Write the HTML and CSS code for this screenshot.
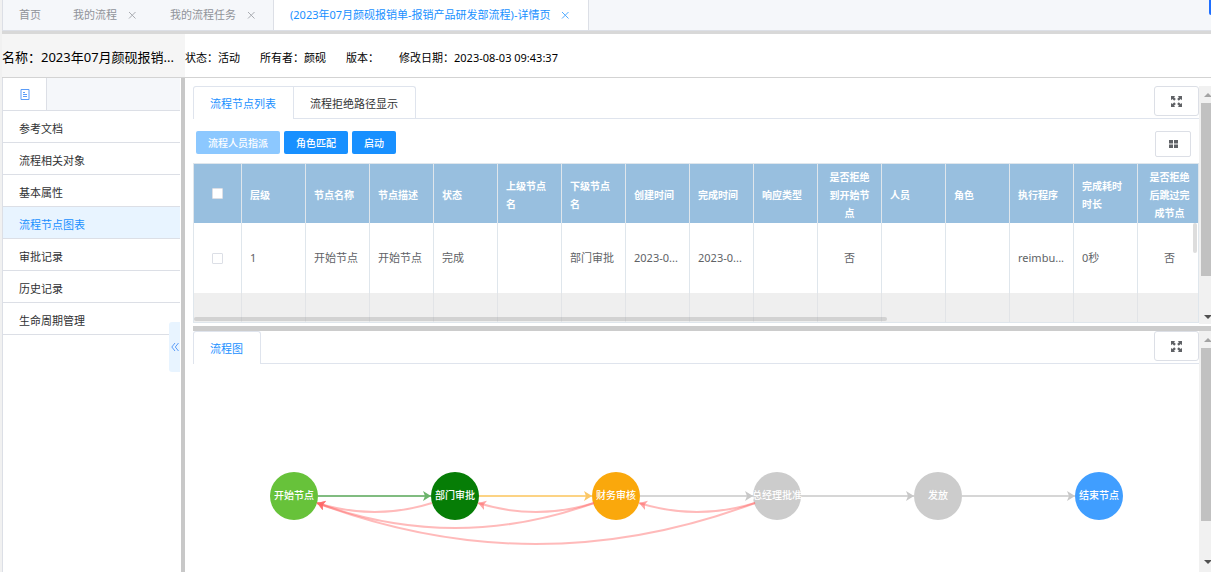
FILE: index.html
```html
<!DOCTYPE html>
<html lang="zh-CN">
<head>
<meta charset="utf-8">
<meta name="viewport" content="width=device-width, initial-scale=1">
<title>流程详情页</title>
<link rel="stylesheet" href="styles.css">
</head>
<body>
<svg class="defs" aria-hidden="true">
  <symbol id="i-close" viewBox="0 0 12 12"><path d="M3 3l6.500 6.500M9.500 3L3 9.500" fill="none" stroke="currentColor"/></symbol>
  <symbol id="i-full" viewBox="0 0 12 12"><path d="M0 0h4.500L3.300 1.400l2 2L3.500 5.200l-2-2L0 4.500zM12 0v4.500l-1.500-1.300-2 2L6.700 3.400l2-2L7.500 0zM0 12V7.500l1.500 1.300 2-2L5.300 8.600l-2 2L4.500 12zM12 12H7.500l1.200-1.400-2-2L8.500 6.800l2 2L12 7.500z" fill="currentColor"/></symbol>
</svg>
<div class="page">
  <nav class="top-tabs">
    <button class="top-tab">首页</button>
    <button class="top-tab">我的流程<svg class="close"><use href="#i-close"/></svg></button>
    <button class="top-tab">我的流程任务<svg class="close"><use href="#i-close"/></svg></button>
    <button class="top-tab is-active">(2023年07月颜砚报销单-报销产品研发部流程)-详情页<svg class="close"><use href="#i-close"/></svg></button>
    <span class="edge-mark"></span>
  </nav>
  <header class="info">
    <h1 class="info-name">名称：2023年07月颜砚报销...</h1>
    <span>状态：活动</span>
    <span>所有者：颜砚</span>
    <span>版本：</span>
    <span>修改日期：2023-08-03 09:43:37</span>
  </header>
  <div class="body">
    <aside class="side">
      <div class="side-tabs">
        <button class="side-tab" aria-label="文档">
          <svg class="doc" viewBox="0 0 10 11"><path d="M1 .5h8v10H1zM3 3.500h2M3 5.500h4M3 7.500h4" fill="none" stroke="currentColor"/></svg>
        </button>
      </div>
      <ul class="menu">
        <li><a href="#">参考文档</a></li>
        <li><a href="#">流程相关对象</a></li>
        <li><a href="#">基本属性</a></li>
        <li><a class="is-active" href="#">流程节点图表</a></li>
        <li><a href="#">审批记录</a></li>
        <li><a href="#">历史记录</a></li>
        <li><a href="#">生命周期管理</a></li>
      </ul>
      <button class="collapse" aria-label="收起">
        <svg viewBox="0 0 8 10"><path d="M4 1L.8 5 4 9M7.500 1L4.300 5l3.200 4" fill="none" stroke="currentColor"/></svg>
      </button>
    </aside>
    <main class="main">
      <section class="pane pane-list">
        <div class="pane-body">
          <div class="tabs">
            <button class="tab is-active">流程节点列表</button>
            <button class="tab">流程拒绝路径显示</button>
            <button class="full" aria-label="全屏"><svg><use href="#i-full"/></svg></button>
          </div>
          <div class="tools">
            <button class="btn" disabled>流程人员指派</button>
            <button class="btn">角色匹配</button>
            <button class="btn">启动</button>
            <button class="grid-btn" aria-label="列设置"><svg viewBox="0 0 9 8"><path d="M0 0h4v3.500H0zM5 0h4v3.500H5zM0 4.500h4V8H0zM5 4.500h4V8H5z" fill="currentColor"/></svg></button>
          </div>
          <div class="table-wrap">
            <table class="table">
              <thead>
                <tr>
                  <th class="pick"><input type="checkbox" aria-label="全选"></th>
                  <th>层级</th><th>节点名称</th><th>节点描述</th><th>状态</th><th>上级节点名</th><th>下级节点名</th><th>创建时间</th><th>完成时间</th><th>响应类型</th><th class="mid">是否拒绝到开始节点</th><th>人员</th><th>角色</th><th>执行程序</th><th>完成耗时时长</th><th class="mid">是否拒绝后跳过完成节点</th>
                </tr>
              </thead>
              <tbody>
                <tr>
                  <td class="pick"><input type="checkbox" aria-label="选择开始节点"></td>
                  <td>1</td><td>开始节点</td><td>开始节点</td><td>完成</td><td></td><td>部门审批</td><td>2023-0...</td><td>2023-0...</td><td></td><td class="mid">否</td><td></td><td></td><td>reimbu...</td><td>0秒</td><td class="mid">否</td>
                </tr>
                <tr class="next">
                  <td></td><td></td><td></td><td></td><td></td><td></td><td></td><td></td><td></td><td></td><td></td><td></td><td></td><td></td><td></td><td></td>
                </tr>
              </tbody>
            </table>
            <span class="thumb-x"></span>
            <span class="thumb-y"></span>
          </div>
        </div>
        <div class="scroll"><i class="up"></i><i class="thumb"></i><i class="down"></i></div>
      </section>
      <div class="splitter"></div>
      <section class="pane pane-graph">
        <div class="pane-body">
          <div class="tabs">
            <button class="tab is-active">流程图</button>
            <button class="full" aria-label="全屏"><svg><use href="#i-full"/></svg></button>
          </div>
          <svg class="graph" viewBox="0 0 1006 208" preserveAspectRatio="xMidYMin meet">
            <defs>
              <marker id="a-green" markerUnits="userSpaceOnUse" markerWidth="9" markerHeight="12" refX="8" refY="5" orient="auto"><path d="M0 0l8 5-8 5 2-5z" fill="#6bb46b"/></marker>
              <marker id="a-amber" markerUnits="userSpaceOnUse" markerWidth="9" markerHeight="12" refX="8" refY="5" orient="auto"><path d="M0 0l8 5-8 5 2-5z" fill="#fbc766"/></marker>
              <marker id="a-grey" markerUnits="userSpaceOnUse" markerWidth="9" markerHeight="12" refX="8" refY="5" orient="auto"><path d="M0 0l8 5-8 5 2-5z" fill="#c8c8c8"/></marker>
              <marker id="a-red" markerUnits="userSpaceOnUse" markerWidth="9" markerHeight="12" refX="8" refY="5" orient="auto"><path d="M0 0l8 5-8 5 2-5z" fill="#f66" fill-opacity=".6"/></marker>
            </defs>
            <g class="nodes">
              <circle cx="101" cy="132" r="24" fill="#67c23a"/>
              <circle cx="262" cy="132" r="24" fill="#067d06"/>
              <circle cx="423" cy="132" r="24" fill="#faa80c"/>
              <circle cx="584" cy="132" r="24" fill="#ccc"/>
              <circle cx="745" cy="132" r="24" fill="#ccc"/>
              <circle cx="906" cy="132" r="24" fill="#409eff"/>
            </g>
            <g class="edges">
              <path d="M125 132H238" stroke="#80bc80" marker-end="url(#a-green)"/>
              <path d="M286 132H399" stroke="#fcd384" marker-end="url(#a-amber)"/>
              <path d="M447 132H560" stroke="#d6d6d6" marker-end="url(#a-grey)"/>
              <path d="M608 132H721" stroke="#d6d6d6" marker-end="url(#a-grey)"/>
              <path d="M769 132H882" stroke="#d6d6d6" marker-end="url(#a-grey)"/>
              <g stroke="#f66" stroke-opacity=".45">
                <path d="M239 139Q182 157 124 139" marker-end="url(#a-red)"/>
                <path d="M401 139Q343 157 285 139" marker-end="url(#a-red)"/>
                <path d="M562 139Q504 157 446 139" marker-end="url(#a-red)"/>
                <path d="M401 139Q262 189 124 139" marker-end="url(#a-red)"/>
                <path d="M562 139Q343 221 124 139" marker-end="url(#a-red)"/>
              </g>
            </g>
            <g class="labels">
              <text x="101" y="135">开始节点</text>
              <text x="262" y="135">部门审批</text>
              <text x="423" y="135">财务审核</text>
              <text x="584" y="135">总经理批准</text>
              <text x="745" y="135">发放</text>
              <text x="906" y="135">结束节点</text>
            </g>
          </svg>
        </div>
        <div class="scroll"><i class="up"></i><i class="thumb"></i><i class="down"></i></div>
      </section>
    </main>
  </div>
</div>
</body>
</html>
```
FILE: styles.css
```css
* { box-sizing: border-box; }
body {
  margin: 0;
  background: #f1f1f1;
  color: #303133;
  font: 11px/16px "Noto Sans", "Noto Sans CJK SC", sans-serif;
}
button { margin: 0; padding: 0; border: 0; background: none; color: inherit; font: inherit; cursor: pointer; }
a { color: inherit; text-decoration: none; }
.defs { position: absolute; width: 0; height: 0; }
.page { display: flex; flex-direction: column; height: 100vh; padding-left: 2px; overflow: hidden; }

.top-tabs {
  position: relative;
  display: flex;
  flex: none;
  height: 31px;
  background: #f5f7fa;
  border-left: 1px solid #dcdfe6;
  border-bottom: 1px solid #dcdfe6;
}
.top-tab { display: flex; align-items: center; gap: 9px; padding: 0 16px; color: #909399; white-space: nowrap; }
.top-tab.is-active { padding: 0 17px 0 16px; background: #fff; border: solid #dcdfe6; border-width: 0 1px; color: #1890ff; }
.close { width: 12px; height: 12px; opacity: .75; }
.edge-mark { position: absolute; top: 0; right: 0; width: 2px; height: 15px; border-radius: 0 0 0 2px; background: #1f6fff; }

.info {
  display: flex;
  flex: none;
  align-items: center;
  gap: 20px;
  height: 47px;
  border-top: 3px solid #d8d8d8;
  border-bottom: 1px solid #d3d3d3;
  background: #fff;
  color: #000;
}
.info span { padding-top: 4px; }
.info-name {
  align-self: stretch;
  width: 183px;
  margin: 0 -20px 0 0;
  background: #f5f5f5;
  font-size: 13px;
  font-weight: 400;
  line-height: 46px;
  overflow: hidden;
  white-space: nowrap;
}

.body { display: flex; flex: 1; min-height: 0; }
.side {
  position: relative;
  flex: none;
  width: 183px;
  padding-right: 1px;
  border-left: 1px solid #dcdfe6;
  border-right: 4px solid #c8c8c8;
  background: #fff;
}
.side-tabs { display: flex; height: 33px; background: #f5f7fa; border-bottom: 1px solid #dcdfe6; }
.side-tab { display: grid; place-items: center; width: 44px; background: #fff; border-right: 1px solid #dcdfe6; color: #5a9cf8; }
.doc { width: 10px; height: 11px; }
.menu { margin: 0; padding: 0; list-style: none; }
.menu a { display: block; height: 32px; padding-left: 16px; border-bottom: 1px solid #dcdfe6; line-height: 35px; }
.menu .is-active { background: #e8f4ff; color: #1890ff; }
.collapse {
  position: absolute;
  top: 244px;
  right: 1px;
  display: grid;
  place-items: center;
  width: 11px;
  height: 50px;
  border-radius: 3px 0 0 3px;
  background: #e8f4ff;
  color: #5a9cf8;
}
.collapse svg { width: 8px; height: 10px; }

.main { display: flex; flex: 1; flex-direction: column; min-width: 0; padding-left: 8px; background: #fff; }
.pane { display: flex; }
.pane-list { flex: none; padding-top: 8px; }
.pane-graph { flex: 1; min-height: 0; }
.pane-body { flex: 1; min-width: 0; }
.splitter { flex: none; height: 5px; background: #ccc; }

.tabs { display: flex; height: 33px; border-bottom: 1px solid #dfe4ed; }
.tab { height: 32px; padding: 2px 17px 0 16px; border: 1px solid #dfe4ed; border-width: 1px 1px 0 0; }
.tab:first-child { border-left-width: 1px; border-top-left-radius: 3px; }
.tab:nth-last-child(2) { border-top-right-radius: 3px; }
.tab.is-active { height: 33px; background: #fff; color: #1890ff; }
.full {
  display: grid;
  place-items: center;
  width: 45px;
  height: 30px;
  margin-left: auto;
  border: 1px solid #dcdfe6;
  border-radius: 3px;
  background: #fff;
  color: #606266;
}
.full svg { width: 11px; height: 11px; }

.tools { display: flex; align-items: flex-start; gap: 4px; padding: 12px 8px 6px 3px; }
.btn { height: 23px; padding: 0 12px; border-radius: 2px; background: #1890ff; color: #fff; font-size: 10px; font-weight: 500; }
.btn:disabled { background: #8cc8ff; }
.grid-btn {
  display: grid;
  place-items: center;
  width: 36px;
  height: 26px;
  margin-left: auto;
  border: 1px solid #dcdfe6;
  border-radius: 2px;
  color: #606266;
}
.grid-btn svg { width: 9px; height: 8px; }

.table-wrap { position: relative; margin-bottom: 3px; border: 1px solid #dfe6ec; overflow: hidden; }
.table { width: 100%; min-width: 1008px; table-layout: fixed; border-collapse: separate; border-spacing: 0; }
.table th, .table td { padding: 0 8px; border-right: 1px solid #dfe6ec; text-align: left; }
.table th { height: 59px; padding: 4px 8px 1px; background: #98bfdf; color: #fff; font-size: 10px; line-height: 18px; }
.table td { height: 70px; padding-right: 0; color: #606266; white-space: nowrap; }
.table td.mid { padding-right: 8px; }
.table .mid { text-align: center; }
.table .pick { width: 48px; padding: 0; text-align: center; }
.table .next td { height: 29px; background: #efefef; border-color: #e2e4e7; }
.table input {
  appearance: none;
  display: block;
  width: 11px;
  height: 11px;
  margin: 0 auto;
  border: 1px solid #dcdfe6;
  border-radius: 1px;
  background: #fff;
}
.thumb-x, .thumb-y { position: absolute; border-radius: 2px; background: rgba(144, 144, 144, .3); }
.thumb-x { left: 0; bottom: 1px; width: 69%; height: 4px; }
.thumb-y { top: 59px; right: 1px; width: 4px; height: 30px; }

.scroll { display: flex; flex: none; flex-direction: column; align-items: center; width: 17px; margin-right: -5px; background: #f1f1f1; }
.pane-list .scroll { margin-bottom: 2px; }
.scroll .thumb { width: 13px; height: 173px; background: #c1c1c1; }
.up, .down { width: 0; height: 0; border: 4px solid transparent; }
.up { margin: 3px 0 6px; border-bottom-color: #a3a3a3; }
.down { margin-top: auto; margin-bottom: 1px; border-top-color: #505050; }
.pane-graph .down { margin-bottom: 4px; }

.graph { display: block; width: 100%; }
.edges { fill: none; stroke-width: 2; }
.labels { fill: #fff; font-size: 10px; font-weight: 500; text-anchor: middle; }
```
